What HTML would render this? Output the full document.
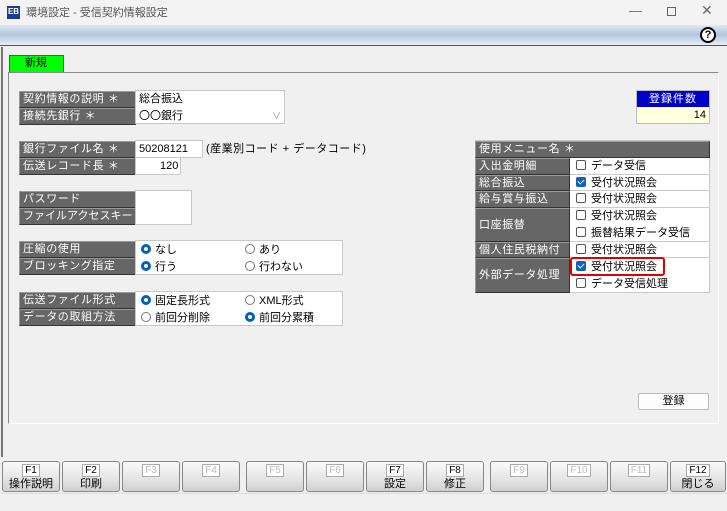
<!DOCTYPE html>
<html><head><meta charset="utf-8">
<style>
*{box-sizing:border-box;margin:0;padding:0}
body{width:727px;height:511px;overflow:hidden;background:#f0f0f0;font-family:"Liberation Sans","Noto Sans CJK JP",sans-serif;font-size:11px;color:#000;position:relative}
.a{position:absolute}
.lb{position:absolute;background:#666;color:#fff;border:1px solid;border-color:#9a9a9a #333 #333 #9a9a9a;padding-left:3px;line-height:15px;font-size:11px;letter-spacing:0.6px;white-space:nowrap;overflow:hidden}
.vb{position:absolute;background:#fff;border:1px solid #c8c8c8}
.t{position:absolute;white-space:nowrap;font-size:11px;line-height:14px}
.rd{display:inline-block;width:10px;height:10px;border-radius:50%;border:1px solid #777;background:#fff;vertical-align:-1px;margin-right:4px}
.rd.on{border:3px solid #0060c0}
.cb{display:inline-block;width:10px;height:10px;border:1px solid #555;border-radius:2px;background:#fff;vertical-align:-1px;margin-right:5px;position:relative}
.cb.on{background:#1060c0;border-color:#1060c0}
.cb.on:after{content:"";position:absolute;left:2px;top:0px;width:3px;height:5px;border:solid #fff;border-width:0 1px 1px 0;transform:rotate(45deg)}
.fk{position:absolute;top:461px;height:31px;width:58px;border:1px solid #888;border-radius:3px;background:linear-gradient(#fafafa,#e4e4e4 60%,#cfcfcf);text-align:center;font-size:11px}
.fk .k{display:inline-block;margin-top:2px;border:1px solid #aaa;background:#fff;padding:0 2px;line-height:11px;font-size:10px}
.fk .n{display:block;line-height:14px}
</style></head><body>
<div class="a" style="left:0;top:0;width:727px;height:25px;background:#f3f3f3"></div>
<div class="a" style="left:7px;top:6px;width:13px;height:13px;background:#1a3d8c;color:#fff;font-size:8px;font-weight:bold;line-height:11px;text-align:center">EB</div>
<div class="t" style="left:26px;top:6px;color:#555;font-size:11px">環境設定 - 受信契約情報設定</div>
<div class="t" style="left:629px;top:4px;color:#666;font-size:13px">—</div>
<div class="a" style="left:667px;top:7px;width:9px;height:9px;border:1px solid #666"></div>
<div class="t" style="left:701px;top:3px;color:#666;font-size:14px">✕</div>
<div class="a" style="left:0;top:25px;width:727px;height:21px;background:linear-gradient(#dfe8f3,#b3c6dc 50%,#e9eef5);border-bottom:1px solid #555"></div>
<div class="a" style="left:700px;top:27px;width:16px;height:16px;border:2px solid #000;border-radius:50%;background:#fff;font-weight:bold;font-size:11px;line-height:12px;text-align:center">?</div>
<div class="a" style="left:1px;top:47px;width:2px;height:410px;background:#777"></div>
<div class="a" style="left:9px;top:55px;width:55px;height:17px;background:#00ff00;border:1px solid #555;border-bottom:none;font-size:11px;line-height:15px;padding-left:15px">新規</div>
<div class="a" style="left:8px;top:72px;width:711px;height:352px;border-top:1px solid #888;border-left:1px solid #888;border-bottom:1px solid #fff;border-right:1px solid #fff"></div>

<div class="lb" style="left:19px;top:91px;width:117px;height:17px">契約情報の説明 ＊</div>
<div class="lb" style="left:19px;top:108px;width:117px;height:17px">接続先銀行 ＊</div>
<div class="vb" style="left:135px;top:90px;width:150px;height:34px"></div>
<div class="t" style="left:139px;top:92px">総合振込</div>
<div class="t" style="left:139px;top:109px">〇〇銀行</div>
<div class="t" style="left:272px;top:109px;color:#888;font-size:9px">∨</div>

<div class="lb" style="left:19px;top:141px;width:117px;height:17px">銀行ファイル名 ＊</div>
<div class="lb" style="left:19px;top:158px;width:117px;height:17px">伝送レコード長 ＊</div>
<div class="vb" style="left:135px;top:140px;width:68px;height:18px"></div>
<div class="vb" style="left:135px;top:157px;width:46px;height:18px"></div>
<div class="t" style="left:139px;top:142px">50208121</div>
<div class="t" style="left:160px;top:159px">120</div>
<div class="t" style="left:206px;top:142px;letter-spacing:0.5px">(産業別コード + データコード)</div>

<div class="lb" style="left:19px;top:191px;width:117px;height:17px">パスワード</div>
<div class="lb" style="left:19px;top:208px;width:117px;height:17px;letter-spacing:0">ファイルアクセスキー</div>
<div class="vb" style="left:135px;top:190px;width:57px;height:35px"></div>

<div class="lb" style="left:19px;top:241px;width:117px;height:17px">圧縮の使用</div>
<div class="lb" style="left:19px;top:258px;width:117px;height:17px">ブロッキング指定</div>
<div class="vb" style="left:135px;top:240px;width:208px;height:35px"></div>
<div class="t" style="left:141px;top:243px"><span class="rd on"></span>なし</div>
<div class="t" style="left:245px;top:243px"><span class="rd"></span>あり</div>
<div class="t" style="left:141px;top:260px"><span class="rd on"></span>行う</div>
<div class="t" style="left:245px;top:260px"><span class="rd"></span>行わない</div>

<div class="lb" style="left:19px;top:292px;width:117px;height:17px">伝送ファイル形式</div>
<div class="lb" style="left:19px;top:309px;width:117px;height:17px">データの取組方法</div>
<div class="vb" style="left:135px;top:291px;width:208px;height:35px"></div>
<div class="t" style="left:141px;top:294px"><span class="rd on"></span>固定長形式</div>
<div class="t" style="left:245px;top:294px"><span class="rd"></span>XML形式</div>
<div class="t" style="left:141px;top:311px"><span class="rd"></span>前回分削除</div>
<div class="t" style="left:245px;top:311px"><span class="rd on"></span>前回分累積</div>

<div class="a" style="left:636px;top:90px;width:74px;height:34px;border:1px solid #bbb"></div>
<div class="a" style="left:637px;top:91px;width:72px;height:16px;background:#0000c8;color:#fff;text-align:center;line-height:16px;letter-spacing:1px">登録件数</div>
<div class="a" style="left:637px;top:107px;width:72px;height:16px;background:#ffffe0;text-align:right;padding-right:3px;line-height:16px">14</div>

<div class="vb" style="left:475px;top:140px;width:235px;height:153px"></div>
<div class="lb" style="left:475px;top:141px;width:235px;height:17px">使用メニュー名 ＊</div>
<div class="lb" style="left:475px;top:158px;width:95px;height:17px">入出金明細</div>
<div class="lb" style="left:475px;top:175px;width:95px;height:16px">総合振込</div>
<div class="lb" style="left:475px;top:191px;width:95px;height:17px">給与賞与振込</div>
<div class="lb" style="left:475px;top:208px;width:95px;height:34px;line-height:32px">口座振替</div>
<div class="lb" style="left:475px;top:242px;width:95px;height:16px">個人住民税納付</div>
<div class="lb" style="left:475px;top:258px;width:95px;height:35px;line-height:33px">外部データ処理</div>
<div class="a" style="left:570px;top:174px;width:140px;height:1px;background:#ccc"></div>
<div class="a" style="left:570px;top:190px;width:140px;height:1px;background:#ccc"></div>
<div class="a" style="left:570px;top:207px;width:140px;height:1px;background:#ccc"></div>
<div class="a" style="left:570px;top:241px;width:140px;height:1px;background:#ccc"></div>
<div class="a" style="left:570px;top:257px;width:140px;height:1px;background:#ccc"></div>
<div class="t" style="left:576px;top:159px"><span class="cb"></span>データ受信</div>
<div class="t" style="left:576px;top:176px"><span class="cb on"></span>受付状況照会</div>
<div class="t" style="left:576px;top:192px"><span class="cb"></span>受付状況照会</div>
<div class="t" style="left:576px;top:209px"><span class="cb"></span>受付状況照会</div>
<div class="t" style="left:576px;top:226px"><span class="cb"></span>振替結果データ受信</div>
<div class="t" style="left:576px;top:243px"><span class="cb"></span>受付状況照会</div>
<div class="t" style="left:576px;top:260px"><span class="cb on"></span>受付状況照会</div>
<div class="t" style="left:576px;top:277px"><span class="cb"></span>データ受信処理</div>
<div class="a" style="left:570px;top:257px;width:95px;height:19px;border:2px solid #e00000;border-radius:3px"></div>

<div class="a" style="left:638px;top:393px;width:71px;height:17px;border:1px solid #bbb;border-radius:2px;background:#fdfdfd;text-align:center;line-height:15px">登録</div>

<div class="fk" style="left:2px"><span class="k">F1</span><span class="n">操作説明</span></div>
<div class="fk" style="left:62px"><span class="k">F2</span><span class="n">印刷</span></div>
<div class="fk" style="left:122px"><span class="k" style="color:#bbb">F3</span></div>
<div class="fk" style="left:182px"><span class="k" style="color:#bbb">F4</span></div>
<div class="fk" style="left:246px"><span class="k" style="color:#bbb">F5</span></div>
<div class="fk" style="left:306px"><span class="k" style="color:#bbb">F6</span></div>
<div class="fk" style="left:366px"><span class="k">F7</span><span class="n">設定</span></div>
<div class="fk" style="left:426px"><span class="k">F8</span><span class="n">修正</span></div>
<div class="fk" style="left:490px"><span class="k" style="color:#bbb">F9</span></div>
<div class="fk" style="left:550px"><span class="k" style="color:#bbb">F10</span></div>
<div class="fk" style="left:610px"><span class="k" style="color:#bbb">F11</span></div>
<div class="fk" style="left:670px;width:56px"><span class="k">F12</span><span class="n">閉じる</span></div>
<div class="a" style="left:0;top:493px;width:727px;height:18px;background:#f0f0f0;border-top:1px solid #ddd"></div>
</body></html>
